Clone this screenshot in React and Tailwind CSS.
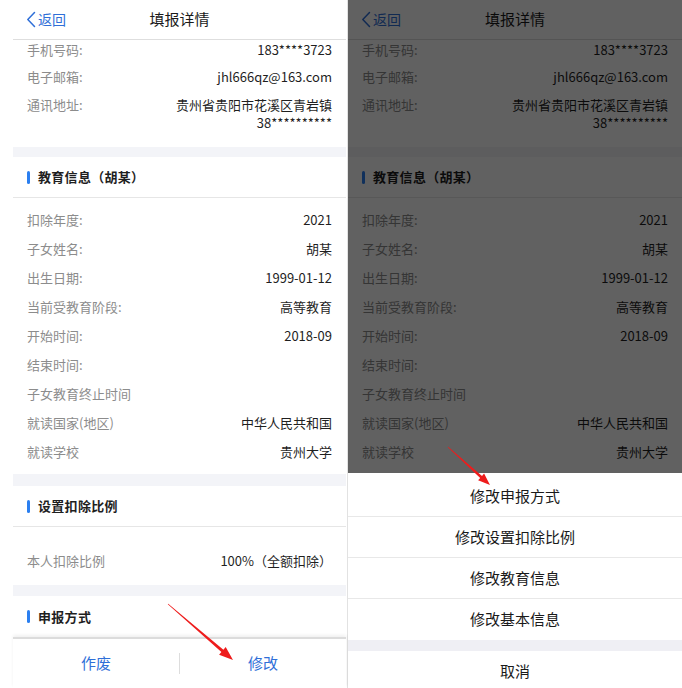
const CONTACT = [
  { label: "手机号码:", value: "183****3723", first: true },
  { label: "电子邮箱:", value: "jhl666qz@163.com" },
];

const EDU = [
  { label: "扣除年度:", value: "2021" },
  { label: "子女姓名:", value: "胡某" },
  { label: "出生日期:", value: "1999-01-12" },
  { label: "当前受教育阶段:", value: "高等教育" },
  { label: "开始时间:", value: "2018-09" },
  { label: "结束时间:", value: "" },
  { label: "子女教育终止时间", value: "" },
  { label: "就读国家(地区)", value: "中华人民共和国" },
  { label: "就读学校", value: "贵州大学" },
];

const SHEET = ["修改申报方式", "修改设置扣除比例", "修改教育信息", "修改基本信息"];

const Row = ({ label, value, first }) => (
  <div
    className={`flex justify-between text-[13px] ${
      first ? "h-[22px] items-start pt-px leading-[17px]" : "h-[29px] items-center leading-[18px]"
    }`}
  >
    <span className="text-[#8c8c8c]">{label}</span>
    <span className="text-[#1f1f1f]">{value}</span>
  </div>
);

const SectionTitle = ({ title, border = true }) => (
  <div
    className={`flex items-center gap-2 h-[41px] px-[14px] ${
      border ? "border-b border-[#e6e6e6]" : ""
    }`}
  >
    <div className="w-[3px] h-[13px] rounded-full bg-[#2b7ff0]" />
    <span className="text-[13px] font-bold text-[#1f1f1f] [text-spacing-trim:space-all] tracking-[0.3px]">
      {title}
    </span>
  </div>
);

const Band = ({ h }) => <div className={`${h} bg-[#f3f4f8]`} />;

const Phone = ({ children }) => (
  <div className="relative flex flex-col h-full bg-white font-['Noto_Sans_CJK_SC',sans-serif]">
    {/* nav bar */}
    <div className="grid grid-cols-[1fr_auto_1fr] items-center h-[40px] border-b border-[#dedede] px-[13px] bg-white">
      <div className="flex items-center gap-[2px] text-[#2f6fd8] text-[14px]">
        <svg width="10" height="17" viewBox="0 0 10 17" fill="none">
          <polyline
            points="8.5,1.5 1.8,8.5 8.5,15.5"
            stroke="#2f6fd8"
            strokeWidth="1.5"
            strokeLinecap="round"
            strokeLinejoin="round"
          />
        </svg>
        <span>返回</span>
      </div>
      <div className="text-[15px] text-[#1a1a1a]">填报详情</div>
      <div />
    </div>

    {/* scrolled content */}
    <div className="flex-1 overflow-hidden">
      <div className="px-[14px]">
        {CONTACT.map((r) => (
          <Row key={r.label} {...r} />
        ))}
        <div className="flex justify-between py-[5px] text-[13px] leading-[18px]">
          <span className="text-[#8c8c8c]">通讯地址:</span>
          <div className="flex flex-col items-end text-[#1f1f1f]">
            <span>贵州省贵阳市花溪区青岩镇</span>
            <span>38**********</span>
          </div>
        </div>
        <div className="h-[10px]" />
      </div>

      <Band h="h-[10px]" />
      <SectionTitle title="教育信息（胡某）" />
      <div className="px-[14px] pt-[7px] pb-[8px]">
        {EDU.map((r) => (
          <Row key={r.label} {...r} />
        ))}
      </div>

      <Band h="h-[12px]" />
      <SectionTitle title="设置扣除比例" />
      <div className="flex justify-between h-[58px] pt-[25px] px-[14px] text-[13px] leading-[18px]">
        <span className="text-[#8c8c8c]">本人扣除比例</span>
        <span className="text-[#1f1f1f] [text-spacing-trim:space-all]">100%（全额扣除）</span>
      </div>

      <Band h="h-[11px]" />
      <SectionTitle title="申报方式" border={false} />
    </div>

    {/* bottom actions */}
    <div className="flex items-center h-[51px] border-t-2 border-[#dcdcdc] shadow-[0_-2px_3px_rgba(0,0,0,0.06)] bg-white text-[15px] text-[#2f6fd8]">
      <div className="flex-1 text-center">作废</div>
      <div className="w-px h-[21px] bg-[#dddddd]" />
      <div className="flex-1 text-center">修改</div>
    </div>

    {children}
  </div>
);

const App = () => {
  return (
    <div className="relative flex w-[682px] h-[688px] overflow-hidden bg-white">
      {/* left: detail page */}
      <div className="w-[348px] h-full pl-[13px] pr-px border-r border-[#e2e2e2]">
        <Phone />
      </div>

      {/* right: same page with action sheet open */}
      <div className="w-[334px] h-full">
        <Phone>
          <div className="absolute inset-0 z-20 bg-black/[0.62]" />
          <div className="absolute inset-x-0 top-[473px] z-30 flex flex-col pt-[3px] bg-white text-[15px] text-[#1a1a1a]">
            {SHEET.map((item, i) => (
              <div
                key={item}
                className={`flex items-center justify-center h-[41px] ${
                  i < 3 ? "border-b border-[#e8e8e8]" : ""
                }`}
              >
                {item}
              </div>
            ))}
            <div className="h-[11px] bg-[#efeff4]" />
            <div className="flex items-center justify-center h-[41px]">取消</div>
          </div>
        </Phone>
      </div>

      {/* red pointer arrows */}
      <svg
        className="absolute inset-0 z-40 pointer-events-none"
        width="682"
        height="688"
        viewBox="0 0 682 688"
      >
        <polygon
          fill="#ee1c1c"
          points="167.8,604.2 221.4,652.0 219.1,654.7 233,660 225.7,647.1 223.4,649.8 168.2,603.8"
        />
        <polygon
          fill="#ee1c1c"
          points="447.8,447.2 480.2,477.9 478.1,480.3 490,485 484.1,473.6 482.0,476.0 448.2,446.8"
        />
      </svg>
    </div>
  );
};

export default App;
